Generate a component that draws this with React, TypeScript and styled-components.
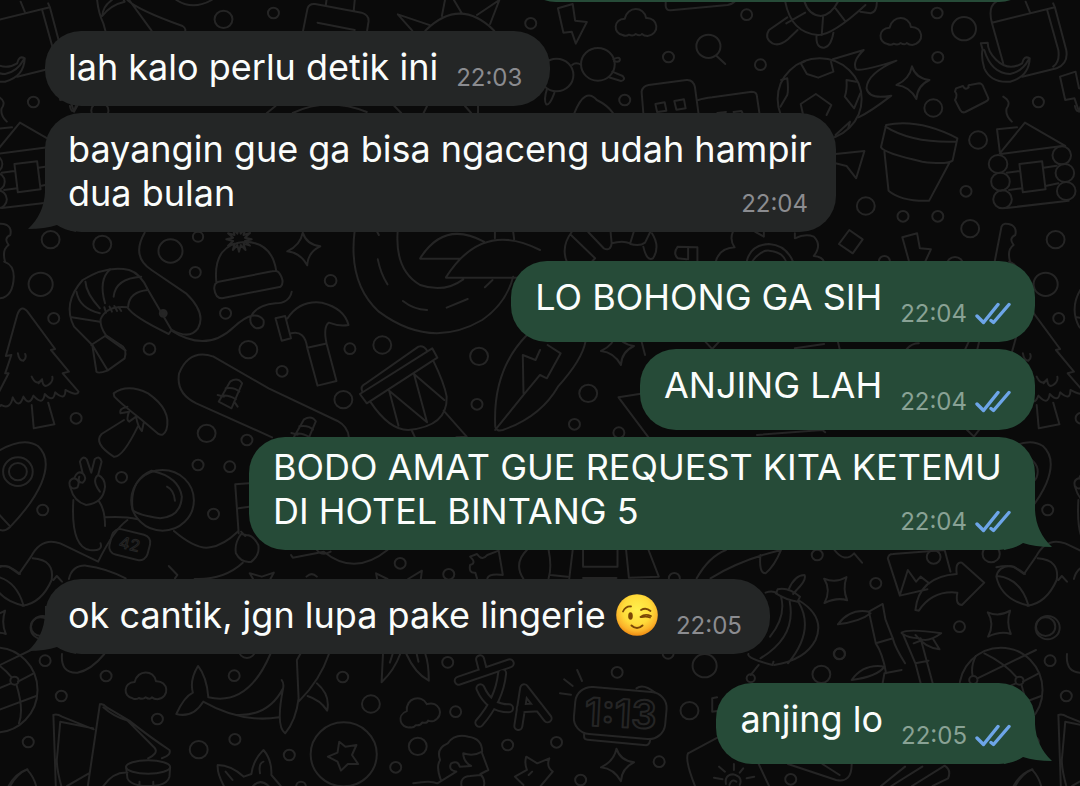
import React from "react";
import styled, { createGlobalStyle } from "styled-components";

const GlobalStyle = createGlobalStyle`
  * { box-sizing: border-box; }
  body { margin: 0; background: #0a0a0a; }
`;

const INCOMING = "#242626";
const OUTGOING = "#264b38";

const Chat = styled.main`
  position: relative;
  min-height: 100vh;
  overflow: hidden;
  padding: 0 45px 22px;
  background: #0a0a0a;
  color: #fbfdfc;
  font-family: Inter, "Liberation Sans", sans-serif;
`;

const Wallpaper = styled.svg`
  position: absolute;
  top: 0;
  left: 0;
  width: 100%;
  height: 100%;
  fill: none;
  stroke: #252525;
  stroke-width: 2;
  stroke-linecap: round;
  stroke-linejoin: round;
  path, circle, ellipse, rect, text { vector-effect: non-scaling-stroke; }
`;

const Messages = styled.ol`
  position: relative;
  display: flex;
  flex-direction: column;
  margin: 0;
  padding: 0;
  list-style: none;
`;

const ScrolledAway = styled.li`
  align-self: flex-end;
  width: 52%;
  height: 74px;
  margin-top: -72px;
  border-radius: 36px;
  background: ${OUTGOING};
`;

const Bubble = styled.li<{ $mine: boolean; $first: boolean; $multi: boolean }>`
  position: relative;
  isolation: isolate;
  align-self: ${(p) => (p.$mine ? "flex-end" : "flex-start")};
  max-width: ${(p) => (p.$mine ? "786px" : "791px")};
  margin-top: ${(p) => (p.$first ? 29 : 7)}px;
  padding: ${(p) => (p.$mine && p.$multi ? 8 : 14)}px ${(p) => (p.$mine ? 24 : 20)}px 17px ${(p) => (p.$mine ? 24 : 23)}px;
  border-radius: 36px;
  background: ${(p) => (p.$mine ? OUTGOING : INCOMING)};
`;

const Text = styled.p`
  display: flow-root;
  margin: 0;
  font-size: 36px;
  line-height: 44px;
`;

const Meta = styled.span<{ $mine: boolean; $low: boolean }>`
  float: right;
  display: flex;
  align-items: center;
  gap: 8px;
  height: 22px;
  margin: ${(p) => (p.$low ? 28 : 22)}px ${(p) => (p.$mine ? 0 : 8)}px 0 18px;
  font-size: 24px;
  line-height: 22px;
  color: ${(p) => (p.$mine ? "#89a295" : "#8b8c90")};
`;

const TailShape = styled.svg<{ $mine: boolean }>`
  position: absolute;
  z-index: -1;
  bottom: 0;
  left: ${(p) => (p.$mine ? "auto" : "-17px")};
  right: ${(p) => (p.$mine ? "-17px" : "auto")};
  fill: ${(p) => (p.$mine ? OUTGOING : INCOMING)};
`;

const EmojiShape = styled.svg`
  vertical-align: -8px;
`;

function Tail({ mine }: { mine: boolean }) {
  return (
    <TailShape $mine={mine} width="48" height="48" viewBox="0 0 48 48" aria-hidden="true">
      <path
        transform={mine ? "translate(48 0) scale(-1 1)" : undefined}
        d="M17 0 V8 Q16 30 0 45 Q17 45 29 41 Q36 46 48 48 V0Z"
      />
    </TailShape>
  );
}

function Wink() {
  return (
    <EmojiShape width="42" height="42" viewBox="0 0 42 42" role="img" aria-label="😉">
      <defs>
        <radialGradient id="face" cx="50%" cy="38%" r="62%">
          <stop offset="0" stopColor="#fff04e" />
          <stop offset="0.55" stopColor="#ffdc3a" />
          <stop offset="0.82" stopColor="#fbb42b" />
          <stop offset="1" stopColor="#ee8b12" />
        </radialGradient>
      </defs>
      <circle cx="21" cy="21" r="20.8" fill="url(#face)" />
      <ellipse cx="14.5" cy="22" rx="2.3" ry="3.8" fill="#7a4706" />
      <g fill="none" stroke="#7a4706" strokeWidth="1.8" strokeLinecap="round">
        <path d="M7 17.5 Q9.500 12 15 12.500" />
        <path d="M25 16 Q30 13 34.500 17" />
        <path d="M24.500 23 Q29 19.500 35 22 M25.500 23.200 Q30 21.800 34 23.500" />
        <path d="M15.500 31.500 Q21 36.500 26.500 31.500" strokeWidth="2" />
      </g>
    </EmojiShape>
  );
}

function ReadTicks() {
  return (
    <svg width="36" height="24" viewBox="0 0 36 24" fill="none" stroke="#6da5e8" strokeWidth="3.4" role="img" aria-label="Read" strokeLinecap="round" strokeLinejoin="round">
      <path d="M2 14 L8.500 20.500 L23 2.500" />
      <path d="M16 18.500 L18.500 20.500 L34 2.500" />
    </svg>
  );
}

type Message = {
  mine: boolean;
  first?: boolean;
  tail?: boolean;
  multi?: boolean;
  text: React.ReactNode;
  time: string;
};

const messages: Message[] = [
  { mine: false, first: true, text: "lah kalo perlu detik ini", time: "22:03" },
  { mine: false, tail: true, multi: true, text: "bayangin gue ga bisa ngaceng udah hampir dua bulan", time: "22:04" },
  { mine: true, first: true, text: "LO BOHONG GA SIH", time: "22:04" },
  { mine: true, text: "ANJING LAH", time: "22:04" },
  { mine: true, tail: true, multi: true, text: "BODO AMAT GUE REQUEST KITA KETEMU DI HOTEL BINTANG 5", time: "22:04" },
  { mine: false, first: true, tail: true, text: <>ok cantik, jgn lupa pake lingerie <Wink /></>, time: "22:05" },
  { mine: true, first: true, tail: true, text: "anjing lo", time: "22:05" },
];

type Dot = [number, number, number];
const Dots = ({ at }: { at: Dot[] }) => (
  <>{at.map(([x, y, r]) => <circle key={`${x}-${y}-${r}`} cx={x} cy={y} r={r} />)}</>
);

const Cloud = ({ x, y, turn = 0 }: { x: number; y: number; turn?: number }) => (
  <path
    transform={`translate(${x} ${y}) rotate(${turn})`}
    d="M-38 35 C-66 30 -66 -12 -32 -14 C-24 -52 24 -52 30 -16 C66 -18 72 32 34 38 Q24 38 18 32 Q12 40 0 32 Q-8 40 -20 34 Q-28 40 -38 35Z"
  />
);

const Sparkle = ({ x, y }: { x: number; y: number }) => (
  <path transform={`translate(${x} ${y})`} d="M-3 -48 Q8 -12 48 -7 Q12 10 10 50 Q-10 12 -48 8 Q-10 -10 -3 -48Z" />
);

const SoftSparkle = ({ x, y }: { x: number; y: number }) => (
  <path transform={`translate(${x} ${y})`} d="M-33 -33 Q0 -18 32 -38 Q20 -2 34 32 Q5 22 -32 40 Q-12 2 -33 -33Z" />
);

const burst = (cx: number, cy: number) =>
  Array.from({ length: 24 }, (_, i) => {
    const r = i % 2 ? 18 : 37;
    const a = (i * Math.PI) / 12;
    return `${i ? "L" : "M"}${Math.round(cx + r * Math.cos(a))} ${Math.round(cy + r * Math.sin(a))}`;
  }).join(" ") + "Z";

// Doodles are grouped by the band of wallpaper they sit in, on a grid three times finer than the page.
const band = (x: number, y: number) => `translate(${x} ${y}) scale(0.3444 0.3333)`;

function Doodles() {
  return (
    <g id="doodles">
      <g transform={band(0, 0)}>
        <Dots at={[[649, 58, 26], [794, 39, 16], [1541, 70, 16], [97, 306, 16], [147, 719, 26], [297, 733, 26], [575, 710, 15], [290, 332, 25]]} />
        <path d="M282 0 Q286 40 300 70 L306 92 M362 5 Q320 15 297 48 Q298 20 325 0 M362 5 Q355 -10 350 -5 M375 0 L440 92 M370 0 Q400 30 530 78 Q540 84 538 92" />
        <path d="M512 0 Q560 32 615 0" />
        <path d="M880 92 L893 25 Q898 10 915 12 L1050 38 Q1072 45 1070 65 L1066 92 M948 0 L946 15 M1030 0 L1027 32 M922 68 L1030 90" />
        <path d="M1235 92 Q1335 -10 1435 92 M1250 76 L1155 43 L1197 92 M1283 48 L1292 0 M1318 0 L1340 38 M1385 45 L1450 0 L1423 72" />
        <path d="M203 318 Q210 348 220 318 M775 339 L800 318 M850 339 Q950 290 1065 336 M1145 318 L1165 339 M1230 339 L1240 318 M1350 318 L1368 339 M1388 318 V339" />
      </g>
      <g transform={band(540, 0)}>
        <Dots at={[[600, 44, 16], [489, 139, 35], [373, 171, 16], [640, 194, 16], [246, 300, 16], [1153, 39, 16], [1231, 86, 35], [1155, 172, 16], [1142, 324, 26], [1272, 420, 26], [1237, 574, 16], [946, 618, 26], [1054, 649, 16], [1155, 649, 16], [1249, 686, 26], [1000, 784, 16], [1205, 795, 24]]} />
        <Cloud x={278} y={70} />
        <Cloud x={1047} y={97} />
        <Sparkle x={1083} y={247} />
        <path d="M52 25 L95 12 L102 62 L136 66 L104 131 L92 95 L68 98 Z M365 5 V18 Q366 32 380 31 L545 15 Q558 12 565 5 M512 167 L538 192" />
        <circle cx="48" cy="225" r="49" />
        <circle cx="168" cy="193" r="49" />
        <path d="M93 195 Q105 185 120 195 M213 178 Q232 168 232 180 Q230 188 215 184 M210 215 L240 228 Q250 240 235 243 L200 232 M20 268 Q10 300 18 313 Q28 318 42 278" />
        <path d="M100 339 Q130 260 165 300 Q195 315 212 339" />
        <path d="M300 339 L295 275 Q298 258 315 255 L425 240 Q445 238 450 262 L460 339 M460 300 Q475 295 500 292 L615 275 Q630 275 630 290 L637 339 M335 312 L362 307 L367 332 L340 336Z M390 303 L418 298 L423 325 L396 329Z M515 339 L540 336 M562 336 L585 333 L588 339" />
        <path d="M712 5 Q730 100 808 105 Q850 105 945 15 M768 5 Q780 45 815 48 Q845 45 865 5 M770 38 L715 70 M822 50 L818 105 M858 25 L885 62 M718 52 L665 90 Q650 115 675 130 Q695 140 720 118 L748 90 M803 105 Q800 145 825 143 Q845 140 852 98 M930 35 L960 40 Q978 35 978 8" />
        <circle cx="812" cy="297" r="122" />
        <path d="M770 183 L757 190 L775 222 L808 233 L852 215 L845 185 M801 282 L846 315 L832 345 M801 282 L757 312 L764 345 M718 235 L700 240 M718 235 Q722 270 718 285 L698 320 M890 240 L918 245 M890 240 Q892 270 885 290 L912 325 L930 280 M858 405 L900 365 L895 385" />
        <path d="M850 178 L940 150 Q905 185 918 208 Q935 215 1035 182 Q950 220 948 265 Q955 300 1020 287 Q960 335 925 352" />
        <path d="M1208 265 L1228 258 Q1235 272 1245 262 Q1240 254 1252 254 L1275 250 Q1284 250 1288 262 L1302 295 Q1302 302 1292 306 L1235 336 Q1226 340 1220 330 L1205 300 Q1214 285 1205 275Z" />
        <path d="M1312 68 L1495 22 L1528 150 Q1535 190 1500 205 L1400 230 M1312 68 L1345 190 M1312 68 Q1300 20 1325 5 M1410 5 L1422 35 M1472 28 L1505 150 Q1510 185 1490 200 M1490 10 L1495 22" />
        <path d="M1280 130 L1300 128 Q1300 155 1325 180 Q1360 215 1400 190 Q1405 165 1422 175 Q1420 230 1365 245 Q1310 250 1290 205 Q1280 170 1285 148Z M1290 150 Q1310 220 1365 222 Q1400 215 1418 180" />
        <path d="M1510 230 L1555 215 L1565 265 L1600 270 L1565 335 L1552 295 L1525 300 Z M1345 290 Q1370 305 1355 325 Q1350 345 1370 365" />
        <Dots at={[[1330, 492, 27], [1515, 466, 27], [1337, 545, 27], [1524, 519, 27], [1343, 598, 27], [1528, 573, 27]]} />
        <path d="M1335 460 L1408 368 L1525 438 M1338 462 L1522 437 M1335 455 L1327 388 L1385 382 M1392 492 L1458 484 L1468 568 L1402 577Z M1355 518 L1392 513 M1462 503 L1500 497 M1362 570 L1400 565 M1468 558 L1505 550 M1355 624 L1535 602" />
        <path d="M1005 375 Q1100 355 1212 415 L1198 482 Q1180 495 1110 485 Q1000 460 990 442 Z M1003 380 Q1080 430 1210 425 M1000 455 L1012 572 Q1050 605 1130 602 L1188 490" />
        <path d="M858 462 L942 453 L918 535 L890 498 L858 490 M898 690 L937 718 L908 760 L868 732Z" />
        <path d="M92 696 Q60 740 78 786 M90 705 L160 775 L150 786 M140 696 L185 745 Q205 755 208 730 L205 696 M208 730 Q240 720 262 730 L272 696 M262 732 Q290 740 305 728 L320 696 M325 700 Q350 740 328 775 Q310 785 300 740" />
        <path d="M457 742 L400 740 Q385 760 400 775 L425 778 M430 742 V778 M457 742 V786 M560 696 Q550 720 565 742 Q520 745 510 786 M625 696 L650 710 V696 M740 700 V715 Q770 700 795 710 Q820 735 795 768 Q820 770 825 786 M600 786 Q610 735 665 732 Q715 735 735 786 M615 786 Q640 750 665 752 Q705 755 715 786" />
        <path d="M1052 712 L1095 700 L1103 745 L1135 748 L1118 786 M1052 712 L1072 786 M1320 786 L1340 680 Q1345 665 1370 675 Q1385 685 1380 705 Q1360 715 1375 735 Q1355 750 1365 786" />
      </g>
      <g transform={band(0, 230)}>
        <Dots at={[[118, 163, 35], [495, 63, 35], [567, 127, 16], [960, 152, 17], [655, 250, 16], [156, 265, 16], [434, 357, 17], [721, 359, 26], [819, 424, 16], [1016, 356, 16], [1110, 345, 26], [1391, 379, 26], [1385, 523, 16], [997, 509, 26], [221, 565, 16], [600, 610, 26], [717, 630, 16]]} />
        <path d="M12 95 Q40 105 40 140 Q38 200 0 205 M420 8 Q380 80 440 120 L540 190 Q600 250 575 295 Q550 330 500 300" />
        <path d="M628 155 Q618 40 715 35 Q790 40 802 122 M635 155 L790 124 Q805 120 810 128 Q828 155 815 170 L645 205 Q625 205 622 175 Q622 158 635 155Z" />
        <path d={burst(694, 28)} />
        <Sparkle x={882} y={56} />
        <path d="M498 302 Q600 370 680 290 Q740 235 765 270 Q770 295 745 295 Q722 285 728 260 Q745 225 800 220 Q840 220 847 185" />
        <path d="M800 265 L828 258 L845 325 L818 332 Z M835 265 Q870 210 935 218 Q1000 235 1012 285 Q985 290 955 278 Q938 290 948 340 L977 453 L922 467 L892 353 Q885 300 845 310 M892 353 L945 341" />
        <path d="M430 180 Q408 130 375 120 Q310 105 240 150 Q180 220 215 290 L268 345 L280 425 Q285 432 312 422 L362 385 Q370 355 350 345 L308 316 Q290 290 292 268 Q310 225 370 232 Q385 260 490 312 L498 300 L430 180" />
        <path d="M430 180 Q375 185 372 230 M330 200 Q335 145 410 140 M305 220 Q285 150 320 118 M290 235 Q250 190 248 155 M290 250 Q230 235 222 185 M208 262 L290 275 M265 345 L305 318 M268 345 L312 420 M305 318 L365 362 M303 232 L308 248 M318 230 L325 245 M332 228 L340 243 M345 232 L352 243" />
        <circle cx="474" cy="250" r="10" fill="#252525" />
        <path d="M1030 0 Q1010 160 1100 245 Q1250 360 1400 270 Q1470 220 1490 140 M1155 0 Q1145 120 1220 165 Q1290 190 1345 148 M1220 85 Q1290 -30 1405 35 M1220 86 L1335 86 M1295 142 Q1400 -30 1568 60 M1295 143 L1500 143 M1437 5 V25 M1490 5 L1493 28 M1097 88 Q1105 130 1125 163 M1170 213 Q1200 238 1240 240 M1297 233 L1358 207 M1408 172 L1430 150 M1095 5 L1100 15" />
        <path d="M15 430 L33 375 L17 378 L50 255 Q62 220 82 248 L160 357 L148 360 L200 425 L182 430 L228 485 Q225 500 190 480 Q190 515 160 487 Q155 520 130 492 Q125 530 97 497 Q85 530 68 500 Q55 540 37 502 Q30 540 3 525 Q-15 545 -25 510 M15 430 L25 430 L-10 500 M92 525 L98 595 L158 583 L140 518 M52 370 Q55 392 68 392 Q78 385 73 372 M92 440 Q105 470 122 448 Q125 475 140 465 Q155 455 152 440 M122 448 L112 460" />
        <path d="M330 490 Q370 460 430 490 Q500 540 483 600 Q475 620 460 612 L412 570 Q350 520 332 500Z M370 530 Q345 535 350 550 L375 545 Q365 570 375 575 L395 560 Q400 590 412 603 L418 575 M360 570 L295 612 Q270 640 330 680 Q355 685 400 590" />
        <path d="M620 380 Q550 355 520 430 Q510 490 570 520 L790 622 M620 380 L780 475 L980 573 Q1010 590 1013 622" />
        <path id="binding" d="M668 455 Q690 440 703 460 L672 535 L635 515 Z M655 475 Q680 470 695 485 M648 497 Q665 495 685 508 M632 495 L650 500 M680 515 L690 530" />
        <use href="#binding" x="214" y="114" />
        <path d="M1045 492 L1255 355 L1270 383 L1065 520 Z M1052 485 Q1045 470 1060 462 L1215 350 Q1230 345 1240 362 M1075 515 Q1130 600 1185 600 Q1300 590 1297 500 Q1290 460 1258 392 M1130 482 L1157 587 M1130 482 L1240 577 M1202 432 L1240 577 M1202 432 L1290 510 M1195 600 L1205 622 M1288 542 L1355 620 L1325 622" />
        <path d="M1530 315 Q1430 420 1438 590 Q1440 605 1460 600 Q1570 560 1620 470 Q1690 390 1700 335 M1438 600 L1520 495 L1568 435 M1520 490 L1518 375 L1555 390 L1568 360 M1568 435 L1588 445 L1628 370 L1590 345" />
      </g>
      <g transform={band(540, 230)}>
        <Dots at={[[140, 490, 26], [100, 583, 16], [229, 608, 16]]} />
        <Sparkle x={225} y={355} />
        <path d="M295 335 L305 375 M302 490 L228 502 L315 622 M630 615 L820 600 L828 607 M480 335 L500 357 L520 335 M740 355 L825 342 M865 335 L870 357 M1065 357 Q1080 340 1100 340 M1235 357 L1245 335 M1270 357 L1275 335 M1240 600 L1260 620 L1275 600" />
      </g>
      <g transform={band(0, 430)}>
        <Dots at={[[353, 142, 16], [124, 240, 16], [575, 105, 16], [667, 110, 16], [620, 252, 16], [1162, 400, 16], [1303, 433, 16], [52, 125, 43], [52, 125, 26], [118, 590, 28]]} />
        <path d="M-30 80 Q60 15 110 48 Q150 85 120 160 Q95 220 30 290 L-10 245 M30 290 Q15 305 0 300" />
        <path d="M205 175 Q195 150 215 145 Q225 120 240 130 L232 95 Q240 75 252 88 L265 128 L275 88 Q290 75 295 95 L285 135 Q305 145 305 170 Q300 220 250 225 Q215 215 205 175 M215 145 Q235 150 225 172 Q210 180 205 170 M240 130 Q255 145 240 158 Q225 158 230 140 M285 135 Q265 150 290 185 M213 210 Q205 350 260 360 Q300 365 292 340 M288 215 Q305 240 305 288" />
        <circle cx="472" cy="211" r="91" />
        <path d="M385 240 Q375 150 440 122 Q520 140 528 200 Q525 260 465 265 Q400 255 385 240 M485 170 Q505 180 508 212 M305 262 Q360 258 400 268 M370 270 Q330 300 285 395 L175 340 Q120 320 90 380 L55 432 L25 410 Q5 405 -25 412 M505 303 Q570 360 610 352 Q650 345 690 305" />
        <rect x="320" y="305" width="114" height="78" rx="24" transform="rotate(14 377 343)" />
        <text x="346" y="360" fontSize="48" strokeWidth="1" transform="rotate(14 377 343)">42</text>
        <path d="M95 385 Q160 390 150 450 Q120 520 65 527 M155 450 L165 438 L180 455 M200 447 Q210 405 250 407 Q310 415 365 445 M490 408 L515 435 L508 445 M565 447 Q650 450 705 398" />
        <path d="M700 312 Q680 340 685 370 Q700 400 730 395 Q755 375 750 345 Q735 315 715 315Z M683 163 L723 160 M683 163 L693 310 M693 235 L723 230 M700 305 L712 318" />
        <path d="M845 375 L850 383 L940 365 Q1030 440 1125 360 M920 360 Q935 380 960 365 M1365 380 L1385 372 Q1400 395 1415 375 L1448 362 L1460 435 Q1420 430 1415 445 M1365 380 Q1385 400 1365 405 Q1360 430 1380 428 L1385 445 M1530 360 Q1490 400 1520 447 M735 447 L725 430 L760 440 L795 428 L785 447 M890 440 Q905 425 920 440 M1095 447 L1092 430 L1125 447 M1222 447 L1225 422 L1185 447" />
      </g>
      <g transform={band(540, 430)}>
        <Dots at={[[390, 445, 16], [805, 375, 16], [975, 460, 16], [1143, 381, 20], [1310, 372, 25], [1218, 590, 16], [1474, 593, 35], [870, 671, 16]]} />
        <SoftSparkle x={858} y={479} />
        <SoftSparkle x={1333} y={580} />
        <path d="M25 360 Q35 410 25 445 M85 445 L95 360 M30 435 L80 440 M125 360 V410 H225 V360 M250 360 L258 442 M315 360 L345 440 L258 443 M125 444 H222 M455 445 Q490 380 540 360 M495 445 Q580 390 700 360 M640 375 Q635 430 655 430 Q680 410 700 360 M855 360 Q885 400 912 370 L935 398" />
        <path d="M1125 478 L1045 497 L1010 385 Q1012 372 1025 372 L1175 360 L1192 425 M1045 495 L1068 420 L1092 455 L1105 440 L1130 460 M1090 540 Q1100 440 1210 432 Q1205 395 1225 398 L1290 458 L1225 525 Q1205 525 1212 488 Q1140 480 1100 542Z" />
        <path d="M1408 432 Q1385 412 1365 408 Q1330 410 1325 440 Q1340 510 1420 527 M1328 438 Q1395 445 1418 525" />
        <path d="M690 478 Q720 470 755 500 L748 515 Q715 510 685 490 Z M722 478 Q740 435 768 435 Q775 450 745 480 L735 492 M655 488 Q675 480 688 490 M750 510 Q830 560 800 630 Q770 690 680 705 M725 515 Q745 620 640 685 M750 515 Q800 600 720 700 M700 500 Q715 560 668 620" />
        <path d="M865 583 Q900 535 955 545 L995 522 L1003 568 L1025 627 Q1030 650 1060 700 M865 583 Q930 575 960 550 M955 545 L975 640 L1025 625 M975 640 Q995 670 1005 730 M1050 608 Q1070 595 1165 610 Q1125 640 1100 625 Q1070 625 1050 610 M1090 615 Q1120 655 1160 658 L1140 625" />
      </g>
      <g transform={band(0, 620)}>
        <Dots at={[[131, 122, 16], [308, 168, 16], [178, 228, 16], [457, 297, 16], [82, 366, 16], [577, 389, 26], [682, 358, 16], [680, 167, 16], [840, 405, 16], [995, 171, 16], [1077, 252, 26], [1213, 379, 26], [1149, 442, 16], [1323, 275, 16], [1300, 127, 16], [1474, 375, 16], [874, 499, 14], [42, 182, 12], [-92, 180, 12], [717, 90, 24]]} />
        <Cloud x={423} y={200} />
        <Cloud x={1216} y={277} turn={-18} />
        <ellipse cx="-12" cy="210" rx="121" ry="127" />
        <path d="M-85 108 Q-100 140 -94 168 M-80 175 L90 90 M-60 100 Q0 130 34 172 M52 185 L98 160 M32 190 L-20 212 M48 195 Q70 270 55 310 M-30 280 L105 228" />
        <path d="M180 102 Q175 160 225 158 Q265 150 303 102 M785 102 Q720 260 605 232 Q600 170 575 138 Q550 180 560 218 Q535 230 512 282 Q560 295 590 245 Q700 310 810 292 M685 285 Q780 290 822 205 Q825 190 818 180 M822 205 Q800 320 828 340 Q860 300 867 235 L862 120 L872 102 M955 102 Q930 180 867 245 M920 190 Q960 225 950 272 Q930 240 893 228" />
        <path d="M1112 102 L1108 187 Q1145 150 1162 102 M1180 102 Q1205 160 1245 182 Q1245 130 1235 102 M1140 102 L1132 128 M1210 102 L1215 125" />
        <path d="M1332 182 L1480 130 M1394 118 L1402 150 M1458 160 Q1450 240 1392 308 M1395 205 Q1420 265 1478 265" strokeWidth="10" />
        <path d="M1332 182 L1480 130 M1394 118 L1402 150 M1458 160 Q1450 240 1392 308 M1395 205 Q1420 265 1478 265" strokeWidth="6" stroke="#0a0a0a" />
        <path d="M1505 318 L1522 205 L1590 295 M1512 265 L1565 262" strokeWidth="10" />
        <path d="M1505 318 L1522 205 L1590 295 M1512 265 L1565 262" strokeWidth="6" stroke="#0a0a0a" />
        <path d="M155 285 L162 498 M155 285 Q165 280 180 290 L272 328 M175 305 L270 325 M175 305 L165 420 Q165 450 178 498 M290 253 L255 498 M290 253 Q300 250 310 262 L375 302 Q440 355 492 390 Q498 405 470 415 M300 262 Q330 290 370 302 L450 385 Q460 400 430 415 M195 498 L258 460" />
        <ellipse cx="430" cy="441" rx="64" ry="20" />
        <path d="M366 441 L370 475 Q380 498 430 498 Q485 498 492 470 L494 441 M300 498 Q330 455 370 458 M405 485 V498 M445 485 V498 M25 498 Q45 460 78 448 Q98 470 105 498" />
        <path d="M650 498 Q630 460 632 435 Q670 435 708 470 L730 462 Q735 420 765 390 Q790 420 788 465 L815 498 M655 455 L675 480 M755 460 Q750 430 765 425 M735 498 Q755 475 780 498" />
        <circle cx="998" cy="403" r="96" />
        <path d="M985 365 L1003 380 L1035 375 L1022 405 L1040 432 L1010 432 L990 452 L980 425 L952 410 L980 398Z" />
        <path d="M1280 480 Q1265 440 1278 420 Q1265 385 1300 370 Q1320 340 1360 350 Q1400 355 1400 395 Q1375 410 1345 400 Q1345 425 1368 438 L1335 440 Q1330 420 1310 430 Q1300 450 1325 455 M1400 400 L1418 450 L1395 462 Q1410 480 1405 498 M1340 498 Q1335 470 1365 468 L1395 465 M1200 490 Q1250 480 1270 490 L1325 455 M1520 495 L1495 470 L1530 450 Q1522 430 1528 410 L1560 430 L1595 415 Q1585 440 1605 455 L1570 498 M1535 465 L1545 455" />
      </g>
      <g transform={band(540, 620)}>
        <Dots at={[[224, 157, 16], [478, 137, 35], [434, 272, 26], [48, 367, 16], [346, 425, 16], [728, 478, 16], [869, 102, 16], [817, 163, 26], [612, 175, 12], [118, 480, 16], [372, 100, 16]]} />
        <Sparkle x={225} y={434} />
        <rect x="100" y="208" width="266" height="142" rx="48" transform="rotate(5 233 279)" />
        <path d="M128 342 V350 Q128 358 138 359 L308 376 Q318 375 320 360 M280 205 Q300 190 333 217 M58 220 L90 224 M70 178 L95 198 M108 150 L122 183" />
        <text x="130" y="321" fontSize="116" fontWeight="600" transform="rotate(3 233 279)">1:13</text>
        <path d="M605 102 Q600 115 675 135 L678 125 M635 135 L612 165 M514 232 L500 235 V275 L514 273 M905 180 Q940 130 1000 140 Q980 170 905 180 M1000 160 L1050 150 M1000 160 L995 189 M1055 45 L1090 130 L1105 189 M1105 55 L1140 189 M1085 70 L1110 60 M1090 130 L1128 122" />
        <path d="M430 400 L530 345 M430 400 Q420 420 450 498 M635 432 L665 498 M720 432 L860 480 Q905 490 905 432 M820 432 L870 465 M990 498 L1060 440 M1020 498 L1110 440 M1080 498 L1175 437 Q1195 450 1185 475 L1140 498 M1380 498 Q1400 460 1430 448" />
        <path d="M540 492 Q535 465 560 463 Q590 470 580 495 M550 495 Q555 475 570 485 M505 473 L530 478 M520 440 L537 455 M563 432 V450 M590 445 L580 458 M600 475 L622 470" />
      </g>
    </g>
  );
}

export default function App() {
  return (
    <>
      <GlobalStyle />
      <Chat>
        <Wallpaper viewBox="0 0 1080 786" preserveAspectRatio="xMinYMin slice" aria-hidden="true">
          <Doodles />
          <use href="#doodles" x="-1005" />
          <use href="#doodles" x="1005" />
        </Wallpaper>
        <Messages>
          <ScrolledAway aria-hidden="true" />
          {messages.map((m, i) => (
            <Bubble key={i} $mine={m.mine} $first={!!m.first} $multi={!!m.multi}>
              {m.tail && <Tail mine={m.mine} />}
              <Text>
                {m.text}
                <Meta $mine={m.mine} $low={m.mine && !m.multi}>
                  <time>{m.time}</time>
                  {m.mine && <ReadTicks />}
                </Meta>
              </Text>
            </Bubble>
          ))}
        </Messages>
      </Chat>
    </>
  );
}
